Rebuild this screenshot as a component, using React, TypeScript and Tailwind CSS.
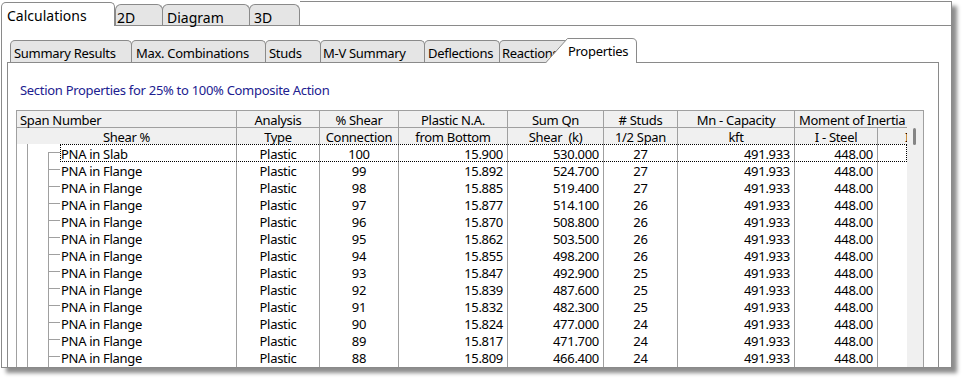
import React from "react";

const rows: [number, string, string, number][] = [
  [100, "15.900", "530.000", 27],
  [99, "15.892", "524.700", 27],
  [98, "15.885", "519.400", 27],
  [97, "15.877", "514.100", 26],
  [96, "15.870", "508.800", 26],
  [95, "15.862", "503.500", 26],
  [94, "15.855", "498.200", 26],
  [93, "15.847", "492.900", 25],
  [92, "15.839", "487.600", 25],
  [91, "15.832", "482.300", 25],
  [90, "15.824", "477.000", 24],
  [89, "15.817", "471.700", 24],
  [88, "15.809", "466.400", 24],
  [87, "15.801", "461.100", 24],
];

const cell = "shrink-0 border-r border-[#a0a0a0]";

function TreeRow({ r, first }: { r: [number, string, string, number]; first: boolean }) {
  return (
    <div className="flex h-[17px] leading-[21px]">
      <div className={`flex w-[220px] ${cell}`}>
        <div className="ml-[10px] w-px bg-[#a0a0a0]" />
        <div className="ml-[20px] flex w-[12px] flex-col">
          <div className={`h-[9px] border-b border-[#a0a0a0] ${first ? "" : "border-l"}`} />
          <div className="-mt-px flex-1 border-l border-[#a0a0a0]" />
        </div>
        <span className="pl-px">{first ? "PNA in Slab" : "PNA in Flange"}</span>
      </div>
      <div className={`w-[83px] text-center ${cell}`}>Plastic</div>
      <div className={`w-[79px] text-center ${cell}`}>{r[0]}</div>
      <div className={`w-[109px] pr-[4px] text-right ${cell}`}>{r[1]}</div>
      <div className={`w-[96px] pr-[4px] text-right ${cell}`}>{r[2]}</div>
      <div className={`w-[74px] text-center ${cell}`}>{r[3]}</div>
      <div className={`w-[117px] pr-[4px] text-right ${cell}`}>491.933</div>
      <div className={`w-[83px] pr-[4px] text-right ${cell}`}>448.00</div>
      <div className="w-[120px] shrink-0" />
    </div>
  );
}

export default function App() {
  return (
    <div className="h-[383px] w-[967px] overflow-hidden bg-white pt-px font-['Noto_Sans',sans-serif] text-black">
      <div className="ml-px w-[951px] shadow-[5px_5px_4px_rgba(0,0,0,0.45)]">
        {/* main tabs */}
        <div className="flex h-[24px] items-end text-[14px]">
          <div className="relative z-10 -mb-px h-[24px] w-[114px] shrink-0 rounded-t-[5px] border border-b-0 border-[#8a8a8a] bg-white pl-[5px] leading-[25px]">
            Calculations
          </div>
          <div className="h-[21px] w-[48px] shrink-0 rounded-t-[6px] border border-b-0 border-[#8a8a8a] bg-[#e5e5e5] pl-px leading-[25px]">
            2D
          </div>
          <div className="-ml-px h-[21px] w-[88px] shrink-0 rounded-t-[6px] border border-b-0 border-[#8a8a8a] bg-[#e5e5e5] pl-[4px] leading-[25px]">
            Diagram
          </div>
          <div className="-ml-px h-[21px] w-[51px] shrink-0 rounded-t-[6px] border border-b-0 border-[#8a8a8a] bg-[#e5e5e5] pl-[4px] leading-[25px]">
            3D
          </div>
          <div className="h-[24px] flex-1 border-r border-t border-[#8a8a8a]" />
        </div>

        <div className="h-[343px] overflow-hidden border border-[#8a8a8a] bg-white tracking-[-0.3px]">
          {/* sub tabs */}
          <div className="flex h-[36px] items-end pl-[8px] text-[13px]">
            <div className="h-[22px] w-[122px] shrink-0 overflow-hidden whitespace-nowrap rounded-t-[5px] border border-b-0 border-[#8a8a8a] bg-[#e5e5e5] pl-[3px] leading-[24px]">
              Summary Results
            </div>
            <div className="-ml-px h-[22px] w-[135px] shrink-0 overflow-hidden whitespace-nowrap rounded-t-[5px] border border-b-0 border-[#8a8a8a] bg-[#e5e5e5] pl-[4px] leading-[24px]">
              Max. Combinations
            </div>
            <div className="-ml-px h-[22px] w-[56px] shrink-0 overflow-hidden whitespace-nowrap rounded-t-[5px] border border-b-0 border-[#8a8a8a] bg-[#e5e5e5] pl-[3px] leading-[24px]">
              Studs
            </div>
            <div className="-ml-px h-[22px] w-[105px] shrink-0 overflow-hidden whitespace-nowrap rounded-t-[5px] border border-b-0 border-[#8a8a8a] bg-[#e5e5e5] pl-[2px] leading-[24px]">
              M-V Summary
            </div>
            <div className="-ml-px h-[22px] w-[76px] shrink-0 overflow-hidden whitespace-nowrap rounded-t-[5px] border border-b-0 border-[#8a8a8a] bg-[#e5e5e5] pl-[3px] leading-[24px]">
              Deflections
            </div>
            <div className="-ml-px h-[22px] w-[70px] shrink-0 overflow-hidden whitespace-nowrap rounded-t-[5px] border border-b-0 border-[#8a8a8a] bg-[#e5e5e5] pl-[2px] leading-[24px]">
              Reactions
            </div>
            <div className="relative z-10 -mb-px -ml-[24px] h-[25px] w-[92px] shrink-0">
              <svg className="absolute inset-0" width="92" height="25" viewBox="0 0 92 25" aria-hidden>
                <path d="M0.5 25 L22.5 0.5 H87 Q91.5 0.5 91.5 5 V25" fill="#fff" stroke="#8a8a8a" />
              </svg>
              <span className="relative block pl-[23px] leading-[26px]">Properties</span>
            </div>
          </div>

          <div className="ml-[5px] h-[400px] w-[932px] border border-[#8a8a8a] pl-[8px] text-[13px]">
            <div className="mt-[18px] pl-[4px] leading-[18px] text-[#20208f]">
              Section Properties for 25% to 100% Composite Action
            </div>

            <div className="mt-[11px] flex w-[908px] border border-[#a0a0a0]">
              <div className="w-[890px] shrink-0 overflow-hidden">
                <div className="flex h-[17px] border-b border-[#a0a0a0] bg-[#f0f0f0] leading-[18px]">
                  <div className={`w-[220px] pl-[3px] ${cell}`}>Span Number</div>
                  <div className={`w-[83px] text-center ${cell}`}>Analysis</div>
                  <div className={`w-[79px] text-center ${cell}`}>% Shear</div>
                  <div className={`w-[109px] text-center ${cell}`}>Plastic N.A.</div>
                  <div className={`w-[96px] text-center ${cell}`}>Sum Qn</div>
                  <div className={`w-[74px] text-center ${cell}`}># Studs</div>
                  <div className={`w-[117px] text-center ${cell}`}>Mn - Capacity</div>
                  <div className="w-[203px] shrink-0 whitespace-nowrap pl-[4px]">Moment of Inertia</div>
                </div>
                <div className="flex h-[16px] bg-[#f0f0f0] leading-[19px]">
                  <div className={`w-[220px] text-center ${cell}`}>Shear %</div>
                  <div className={`w-[83px] text-center ${cell}`}>Type</div>
                  <div className={`w-[79px] text-center ${cell}`}>Connection</div>
                  <div className={`w-[109px] text-center ${cell}`}>from Bottom</div>
                  <div className={`w-[96px] whitespace-pre text-center ${cell}`}>Shear  (k)</div>
                  <div className={`w-[74px] text-center ${cell}`}>1/2 Span</div>
                  <div className={`w-[117px] text-center ${cell}`}>kft</div>
                  <div className={`w-[83px] text-center ${cell}`}>I - Steel</div>
                  <div className="w-[120px] shrink-0 whitespace-nowrap pl-[27px]">I - Composite</div>
                </div>
                <div className="relative">
                  {rows.map((r, i) => (
                    <TreeRow key={r[0]} r={r} first={i === 0} />
                  ))}
                  <div className="absolute left-[43px] top-0 h-[18px] w-[847px] border border-dotted border-black" />
                </div>
              </div>
              <div className="w-[16px] shrink-0 bg-[#f0f0f0] pl-[6px] pt-[17px]">
                <div className="h-[17px] w-[3px] rounded-full bg-[#858585]" />
              </div>
            </div>
          </div>
        </div>
      </div>
    </div>
  );
}
